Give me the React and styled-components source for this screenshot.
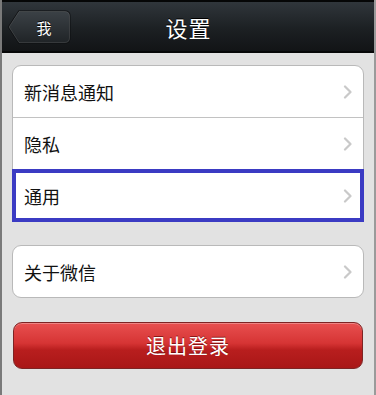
import React from 'react'
import styled, { createGlobalStyle } from 'styled-components'

const GlobalStyle = createGlobalStyle`
  html, body {
    margin: 0;
    padding: 0;
    background: #e2e2e2;
  }
  body {
    font-family: "Liberation Sans", "Noto Sans CJK SC", sans-serif;
  }
`

function Chevron() {
  return (
    <svg width="10" height="14" viewBox="0 0 10 14">
      <path
        d="M2 1.5 L7.5 7 L2 12.5"
        fill="none"
        stroke="#c9c9c9"
        strokeWidth="2.2"
        strokeLinecap="round"
        strokeLinejoin="round"
      />
    </svg>
  )
}

function BackButton({ label }) {
  return (
    <StyledBack>
      <svg width="64" height="34" viewBox="0 0 64 34">
        <defs>
          <linearGradient id="backFill" x1="0" y1="0" x2="0" y2="1">
            <stop offset="0" stopColor="#3b4146" />
            <stop offset="1" stopColor="#202427" />
          </linearGradient>
        </defs>
        <path
          d="M11.5 0.5 H58 Q63.5 0.5 63.5 6 V28 Q63.5 33.5 58 33.5 H11.5 L0.8 17 Z"
          fill="#0c0e10"
        />
        <path
          d="M12 1.5 H58 Q62.5 1.5 62.5 6 V28 Q62.5 32.5 58 32.5 H12 L2 17 Z"
          fill="url(#backFill)"
          stroke="rgba(255,255,255,0.14)"
          strokeWidth="1"
        />
      </svg>
      <span>{label}</span>
    </StyledBack>
  )
}

function SettingRow({ label, selected }) {
  return (
    <StyledRow selected={selected}>
      <span>{label}</span>
      <Chevron />
    </StyledRow>
  )
}

export default function App() {
  return (
    <StyledPage>
      <GlobalStyle />
      <StyledNav>
        <BackButton label="我" />
        <StyledTitle>设置</StyledTitle>
        <div />
      </StyledNav>
      <StyledContent>
        <StyledGroup>
          <SettingRow label="新消息通知" />
          <SettingRow label="隐私" />
          <SettingRow label="通用" selected />
        </StyledGroup>
        <StyledGroup>
          <SettingRow label="关于微信" />
        </StyledGroup>
        <StyledLogout>退出登录</StyledLogout>
      </StyledContent>
    </StyledPage>
  )
}

const StyledPage = styled.div`
  width: 376px;
  height: 395px;
  display: flex;
  flex-direction: column;
  background: #e2e2e2;
  border-left: 2px solid #7a7a7a;
  border-right: 2px solid #9a9a9a;
  box-sizing: border-box;
  overflow: hidden;
`

const StyledNav = styled.div`
  height: 53px;
  box-sizing: border-box;
  display: grid;
  grid-template-columns: 1fr auto 1fr;
  align-items: center;
  padding: 0 4px 0 5px;
  background: linear-gradient(#30363b, #1c2023 55%, #121416);
  border-top: 2px solid #050606;
  border-bottom: 2px solid #070808;
`

const StyledBack = styled.div`
  position: relative;
  width: 64px;
  height: 34px;
  margin-top: 1px;

  & > svg {
    position: absolute;
    left: 0;
    top: 0;
  }
  & > span {
    position: relative;
    display: flex;
    align-items: center;
    justify-content: center;
    height: 34px;
    padding-left: 10px;
    color: #fff;
    font-size: 15px;
    text-shadow: 0 -1px 0 #000;
  }
`

const StyledTitle = styled.div`
  color: #fff;
  font-size: 22px;
  letter-spacing: 1px;
  text-shadow: 0 -1px 0 #000;
  margin-top: 1px;
`

const StyledContent = styled.div`
  display: flex;
  flex-direction: column;
  gap: 23px;
  padding: 12px 10px 0 10px;
`

const StyledGroup = styled.div`
  background: #fff;
  border: 1px solid #b9b9b9;
  border-radius: 9px;

  & > div + div {
    border-top: 1px solid #c2c2c2;
  }
`

const StyledRow = styled.div`
  height: 51px;
  display: flex;
  align-items: center;
  justify-content: space-between;
  padding: 0 10px 0 11px;
  font-size: 18px;
  color: #111;
  ${({ selected }) =>
    selected &&
    `
    margin: 0 -1px -1px;
    height: 53px;
    box-sizing: border-box;
    border: 4px solid #3b3bc3 !important;
    padding: 0 7px 0 8px;
  `}
`

const StyledLogout = styled.div`
  height: 47px;
  margin: 1px 1px 0;
  box-sizing: border-box;
  display: flex;
  align-items: center;
  justify-content: center;
  color: #fff;
  font-size: 20px;
  letter-spacing: 1px;
  text-shadow: 0 -1px 0 rgba(80, 0, 0, 0.6);
  border: 1px solid #7d2424;
  border-radius: 9px;
  background: linear-gradient(#e85050, #d63434 45%, #b81e1e 60%, #a91717);
  box-shadow: inset 0 1px 0 rgba(255, 255, 255, 0.3);
`
